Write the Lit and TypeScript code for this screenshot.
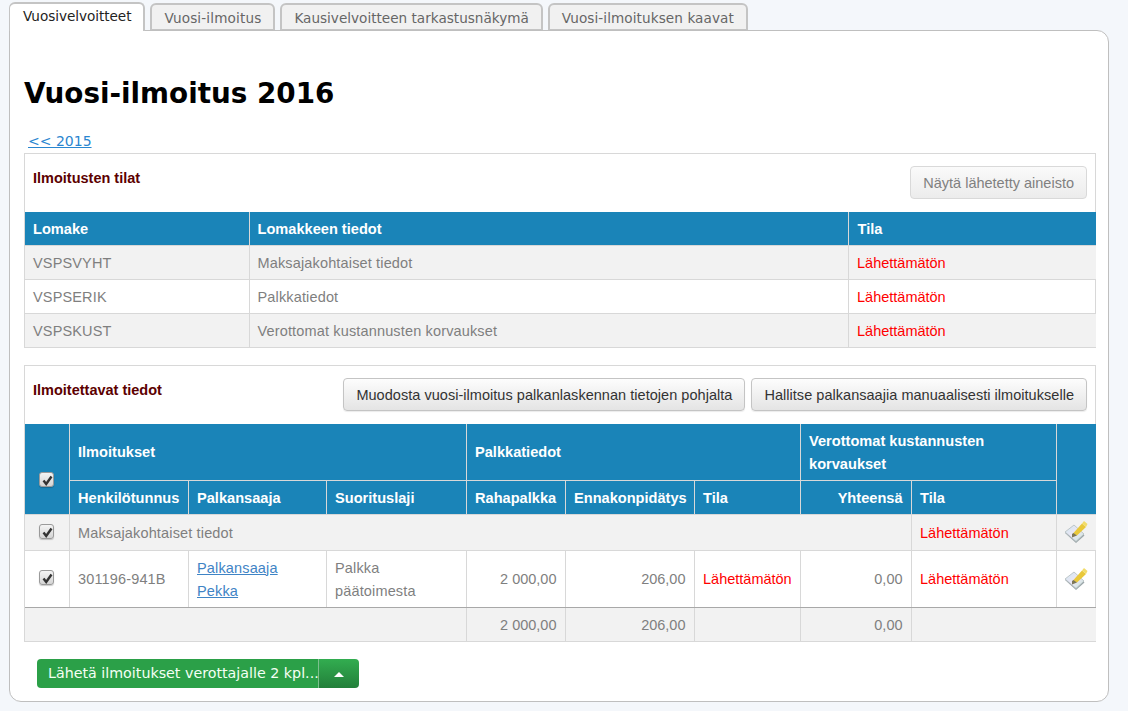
import { LitElement, html, css, svg } from "lit";
import { customElement } from "lit/decorators.js";

const icon = svg`<svg class="pen" width="24" height="24" viewBox="0 0 24 24">
  <defs><linearGradient id="pg" x1="0" y1="0" x2="1" y2="1"><stop offset="0" stop-color="#cfe8ee"/><stop offset=".5" stop-color="#ece6f6"/><stop offset="1" stop-color="#c8e6d8"/></linearGradient></defs>
  <path d="M1 13 L10 6 L20.5 15.5 L12 23 Z" fill="#9aa5a8"/>
  <path d="M1 12 L10 5 L20 14 L12 21.5 Z" fill="url(#pg)" stroke="#b4bcbf" stroke-width=".8"/>
  <path d="M9 13.5 L18 3.5 L22 7 L13 15.5 Z" fill="#e9c83a"/>
  <path d="M18 3.5 L20 1 L23.5 4 L22 7 Z" fill="#f2dc6a"/>
  <path d="M8 14 L9.5 13 L13 15.5 L8 17.5 Z" fill="#7c7658"/>
</svg>`;

@customElement("app-root")
export class AppRoot extends LitElement {
  static styles = css`
    :host { display: block; width: 1128px; height: 711px; overflow: hidden; background: #f4f7fb; font-family: "Liberation Sans", Arial, sans-serif; font-size: 14.5px; color: #7f7f7f; box-sizing: border-box; padding-top: 2px; }
    * { box-sizing: border-box; }
    .tabs { display: flex; gap: 5px; padding-left: 9px; height: 29px; position: relative; z-index: 1; font-family: "DejaVu Sans", Verdana, sans-serif; font-size: 13.6px; }
    .tab { margin-top: 1px; height: 27px; border: 2px solid #c4c4c4; border-bottom: 1px solid #c4c4c4; border-radius: 6px 6px 0 0; background: #f1f1f1; color: #666; padding: 5px 12px 0; white-space: nowrap; }
    .tab.on { margin-top: 0; height: 29px; border: 1px solid #c4c4c4; border-top: 2px solid #c4c4c4; border-right: 2px solid #c4c4c4; border-bottom: 0; background: #fff; color: #222; padding: 4px 12px 0 13px; letter-spacing: -.05px; }
    .tab.t2 { letter-spacing: .14px; }
    .tab.t4 { letter-spacing: .08px; }
    .panel { margin: -1px 19px 0 9px; height: 672px; background: #fff; border: 1px solid #bfbfbf; border-radius: 0 12px 12px 12px; padding: 0 12px 0 14px; }
    h1 { margin: 0; padding-top: 46px; height: 97px; font: bold 27.8px/34px "DejaVu Sans", Verdana, sans-serif; color: #000; }
    .back { display: block; height: 25px; padding: 5px 5px 0 4px; font: 14px/16px "DejaVu Sans", Verdana, sans-serif; color: #2a86d0; text-decoration: underline; }
    .box { border: 1px solid #d8d8d8; }
    .box + .box { margin-top: 17px; }
    .bar { display: flex; justify-content: flex-end; align-items: flex-start; gap: 6px; padding: 12px 8px 0; height: 58px; }
    .bar b { flex: 1; color: #5c0000; font-size: 14.5px; line-height: 24px; }
    .btn { height: 33px; border: 1px solid #c4c4c4; border-radius: 4px; background: linear-gradient(#fdfdfd, #e4e4e4); color: #333; font: 14.5px "Liberation Sans", sans-serif; letter-spacing: .035px; padding: 0 12px; white-space: nowrap; box-shadow: 0 1px 1px rgba(0,0,0,.08); }
    .btn.off { color: #808080; border-color: #d9d9d9; background: linear-gradient(#fafafa, #ececec); box-shadow: none; letter-spacing: 0; }
    table { border-collapse: collapse; table-layout: fixed; width: 1071px; }
    th, td { border: 1px solid #d8d8d8; padding: 2px 8px 0 8.5px; text-align: left; vertical-align: middle; line-height: 23px; }
    td { letter-spacing: .15px; }
    th { background: #1a84b8; color: #fff; font-weight: bold; font-size: 14.6px; }
    tr > :first-child { border-left: 0; }
    tr > :last-child { border-right: 0; }
    thead tr:first-child th { border-top: 0; }
    tbody tr:last-child td { border-bottom: 0; }
    .gray td { background: #f2f2f2; }
    .t1 th { padding-left: 8px; height: 33px; }
    .t1 th:last-child { padding-left: 9px; }
    .t1 td { padding-left: 8px; height: 34px; }
    .t1 td:last-child { padding-left: 8.5px; }
    td.red { color: #f00; letter-spacing: 0; }
    .r { text-align: right; }
    td.r { letter-spacing: 0; }
    th.c, td.c { text-align: center; padding: 0; }
    a.l { color: #3f84c5; text-decoration: underline; }
    .h1r { height: 56px; }
    .h2r { height: 34px; }
    .rg { height: 36px; }
    .rw { height: 57px; }
    .rf { height: 34px; }
    .rw td { border-bottom: 1px solid #a8a8a8; }
    .rf td { border-top: 1px solid #a8a8a8; }
    .ck { display: inline-block; width: 15px; height: 15px; border: 1px solid #9a9a9a; border-radius: 3px; background: linear-gradient(#f4f4f4, #d4d4d4); vertical-align: middle; position: relative; top: -1px; box-shadow: 0 1px 1px rgba(0,0,0,.2); }
    .rw .ck { top: -2px; }
    .ck svg { position: absolute; left: 1px; top: 1px; }
    th .ck { top: 10px; }
    .pen { display: block; margin: 0 auto; }
    .send { display: inline-flex; height: 29px; margin: 17px 0 0 13px; border-radius: 4px; overflow: hidden; color: #f4fff4; font: 14.25px/28px "DejaVu Sans", Verdana, sans-serif; }
    .send .m { width: 281px; padding-left: 11px; white-space: nowrap; background: #2ba048; }
    .send .d { width: 41px; border-left: 1px solid #7cc08e; display: flex; align-items: center; justify-content: center; background: linear-gradient(#32ad50, #237f3a); }
    .tri { width: 0; height: 0; border: 5px solid transparent; border-top: 0; border-bottom: 5px solid #fff; margin-top: 2px; }
  `;

  private ck() {
    return html`<span class="ck"><svg width="13" height="13" viewBox="0 0 13 13"><path d="M2.5 6.5 L5.2 10 L10.5 2.5" fill="none" stroke="#333" stroke-width="2.4"/></svg></span>`;
  }

  render() {
    const lah = "Lähettämätön";
    return html`
      <div class="tabs">
        <div class="tab on">Vuosivelvoitteet</div>
        <div class="tab t2">Vuosi-ilmoitus</div>
        <div class="tab">Kausivelvoitteen tarkastusnäkymä</div>
        <div class="tab t4">Vuosi-ilmoituksen kaavat</div>
      </div>
      <div class="panel">
        <h1>Vuosi-ilmoitus 2016</h1>
        <a class="back" href="#">&lt;&lt; 2015</a>
        <div class="box">
          <div class="bar"><b>Ilmoitusten tilat</b><button class="btn off">Näytä lähetetty aineisto</button></div>
          <table class="t1">
            <colgroup><col style="width:224px"/><col style="width:599px"/><col/></colgroup>
            <thead><tr><th>Lomake</th><th>Lomakkeen tiedot</th><th>Tila</th></tr></thead>
            <tbody>
              <tr class="gray"><td>VSPSVYHT</td><td>Maksajakohtaiset tiedot</td><td class="red">${lah}</td></tr>
              <tr><td>VSPSERIK</td><td>Palkkatiedot</td><td class="red">${lah}</td></tr>
              <tr class="gray"><td>VSPSKUST</td><td>Verottomat kustannusten korvaukset</td><td class="red">${lah}</td></tr>
            </tbody>
          </table>
        </div>
        <div class="box">
          <div class="bar"><b>Ilmoitettavat tiedot</b>
            <button class="btn">Muodosta vuosi-ilmoitus palkanlaskennan tietojen pohjalta</button>
            <button class="btn">Hallitse palkansaajia manuaalisesti ilmoitukselle</button>
          </div>
          <table class="t2">
            <colgroup>
              <col style="width:44px"/><col style="width:119px"/><col style="width:138px"/><col style="width:140px"/>
              <col style="width:99px"/><col style="width:129px"/><col style="width:106px"/><col style="width:111px"/><col style="width:145px"/><col/>
            </colgroup>
            <thead>
              <tr class="h1r">
                <th rowspan="2" class="c">${this.ck()}</th>
                <th colspan="3">Ilmoitukset</th>
                <th colspan="3">Palkkatiedot</th>
                <th colspan="2">Verottomat kustannusten<br/>korvaukset</th>
                <th rowspan="2"></th>
              </tr>
              <tr class="h2r">
                <th>Henkilötunnus</th><th>Palkansaaja</th><th>Suorituslaji</th>
                <th>Rahapalkka</th><th>Ennakonpidätys</th><th>Tila</th>
                <th class="r">Yhteensä</th><th>Tila</th>
              </tr>
            </thead>
            <tbody>
              <tr class="gray rg">
                <td class="c">${this.ck()}</td>
                <td colspan="7">Maksajakohtaiset tiedot</td>
                <td class="red">${lah}</td>
                <td class="c">${icon}</td>
              </tr>
              <tr class="rw">
                <td class="c">${this.ck()}</td>
                <td>301196-941B</td>
                <td><a class="l" href="#">Palkansaaja</a><br/><a class="l" href="#">Pekka</a></td>
                <td>Palkka<br/>päätoimesta</td>
                <td class="r">2 000,00</td>
                <td class="r">206,00</td>
                <td class="red">${lah}</td>
                <td class="r">0,00</td>
                <td class="red">${lah}</td>
                <td class="c">${icon}</td>
              </tr>
              <tr class="gray rf">
                <td colspan="4"></td>
                <td class="r">2 000,00</td>
                <td class="r">206,00</td>
                <td></td>
                <td class="r">0,00</td>
                <td colspan="2"></td>
              </tr>
            </tbody>
          </table>
        </div>
        <div class="send"><span class="m">Lähetä ilmoitukset verottajalle 2 kpl...</span><span class="d"><span class="tri"></span></span></div>
      </div>
    `;
  }
}
